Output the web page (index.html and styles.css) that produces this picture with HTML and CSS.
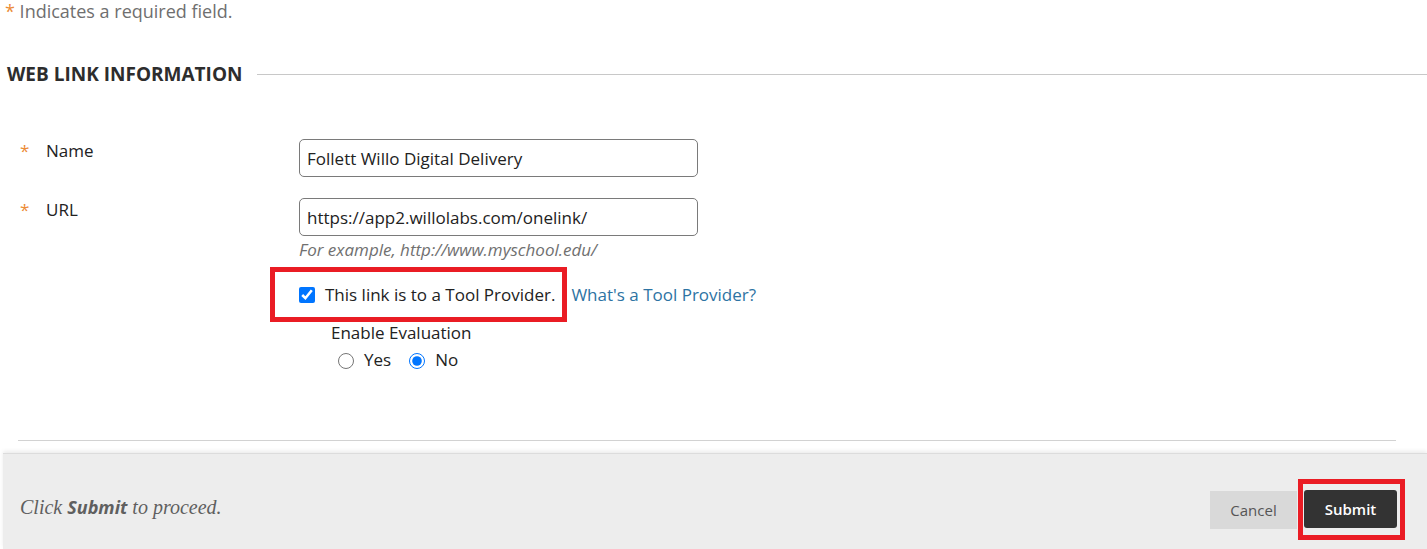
FILE: index.html
```html
<!DOCTYPE html>
<html lang="en">
<head>
  <meta charset="UTF-8">
  <meta name="viewport" content="width=device-width, initial-scale=1.0">
  <title>Create Web Link</title>
  <link rel="stylesheet" href="styles.css">
</head>
<body>
  <p class="req-note"><span class="req">*</span> Indicates a required field.</p>

  <div class="section-head">
    <h2>WEB LINK INFORMATION</h2>
    <div class="section-line"></div>
  </div>

  <form id="webLinkForm">
    <div class="row">
      <label class="label-cell" for="linkName"><span class="req">*</span><span>Name</span></label>
      <div class="field-cell">
        <input type="text" id="linkName" value="Follett Willo Digital Delivery">
      </div>
    </div>

    <div class="row row-url">
      <label class="label-cell" for="linkUrl"><span class="req">*</span><span>URL</span></label>
      <div class="field-cell">
        <input type="text" id="linkUrl" value="https://app2.willolabs.com/onelink/">
        <p class="hint">For example, http://www.myschool.edu/</p>

        <div class="tool-row">
          <label class="highlight tool-check">
            <input type="checkbox" checked>
            <span>This link is to a Tool Provider.</span>
          </label>
          <a href="#" class="help-link">What's a Tool Provider?</a>
        </div>

        <p class="eval-title">Enable Evaluation</p>
        <div class="radios">
          <label><input type="radio" name="evaluation" value="yes"> Yes</label>
          <label><input type="radio" name="evaluation" value="no" checked> No</label>
        </div>
      </div>
    </div>
  </form>

  <div class="divider"></div>

  <div class="footer">
    <p class="footer-note">Click <b>Submit</b> to proceed.</p>
    <div class="footer-buttons">
      <button type="button" class="btn-cancel">Cancel</button>
      <span class="highlight submit-wrap">
        <button type="button" class="btn-submit">Submit</button>
      </span>
    </div>
  </div>
</body>
</html>
```

FILE: styles.css
```css
html, body {
  overflow: hidden;
}
body {
  font-family: "Open Sans", Arial, sans-serif;
  margin: 0;
  background-color: #fff;
  color: #222;
  font-size: 17px;
}
.req {
  color: #ec8b36;
}
.req-note {
  margin: 0;
  padding-left: 5px;
  font-size: 18px;
  line-height: 22px;
  color: #6f6f6f;
}
.section-head {
  display: flex;
  align-items: center;
  margin-top: 39px;
}
.section-head h2 {
  margin: 0 0 0 7px;
  font-size: 19px;
  line-height: 26px;
  font-weight: 700;
  color: #2d2d2d;
}
.section-line {
  flex: 1;
  height: 1px;
  margin-left: 15px;
  background-color: #c8c8c8;
}
form {
  margin-top: 52px;
}
.row {
  display: flex;
}
.row-url {
  margin-top: 21px;
}
.label-cell {
  width: 299px;
  box-sizing: border-box;
  padding-left: 20px;
  display: flex;
  gap: 16px;
  line-height: 24px;
}
.label-cell .req {
  width: 10px;
}
.field-cell {
  display: flex;
  flex-direction: column;
  align-items: flex-start;
}
input[type="text"] {
  width: 399px;
  height: 38px;
  box-sizing: border-box;
  padding: 0 7px;
  border: 1px solid #7a7a7a;
  border-radius: 5px;
  font-family: inherit;
  font-size: 17px;
  color: #222;
}
.hint {
  margin: 3px 0 0;
  line-height: 22px;
  font-style: italic;
  color: #707070;
}
.tool-row {
  display: flex;
  align-items: center;
  margin-top: 6px;
  margin-left: -29px;
}
.highlight {
  border: 5px solid #ea1c24;
}
.tool-check {
  display: flex;
  align-items: center;
  gap: 10px;
  padding: 10px 7px 10px 24px;
  line-height: 25px;
}
.tool-check input {
  width: 16px;
  height: 16px;
  margin: 0;
}
.help-link {
  margin-left: 4px;
  color: #2d73a3;
  text-decoration: none;
}
.eval-title {
  margin: 0 0 0 32px;
  line-height: 22px;
}
.radios {
  display: flex;
  gap: 18px;
  margin-left: 39px;
  margin-top: 5px;
  line-height: 22px;
}
.radios label {
  display: flex;
  align-items: center;
  gap: 10px;
}
.radios input {
  width: 16px;
  height: 16px;
  margin: 2px 0 0;
}
.divider {
  height: 1px;
  background-color: #d2d2d2;
  margin: 69px 31px 0 18px;
}
.footer {
  display: flex;
  align-items: center;
  justify-content: space-between;
  margin: 12px 0 0 3px;
  height: 96px;
  box-sizing: border-box;
  padding: 16px 22px 0 17px;
  background-color: #ededed;
  border-top: 1px solid #dcdcdc;
  box-shadow: 0 -2px 4px rgba(0, 0, 0, 0.08);
}
.footer-note {
  margin: -5px 0 0;
  font-family: "Liberation Serif", "DejaVu Serif", serif;
  font-style: italic;
  font-size: 20px;
  color: #5f5f5f;
}
.footer-note b {
  font-family: "Open Sans", Arial, sans-serif;
  font-size: 18px;
}
.footer-buttons {
  display: flex;
  align-items: center;
  gap: 1px;
}
button {
  height: 38px;
  border: none;
  border-radius: 3px;
  font-family: inherit;
  font-size: 15px;
  cursor: pointer;
}
.btn-cancel {
  width: 87px;
  background-color: #d9d9d9;
  color: #555;
  border-radius: 0;
}
.submit-wrap {
  display: flex;
  padding: 6px 3px 7px 1px;
}
.btn-submit {
  width: 93px;
  background-color: #333;
  color: #fff;
  font-weight: 600;
}
```
